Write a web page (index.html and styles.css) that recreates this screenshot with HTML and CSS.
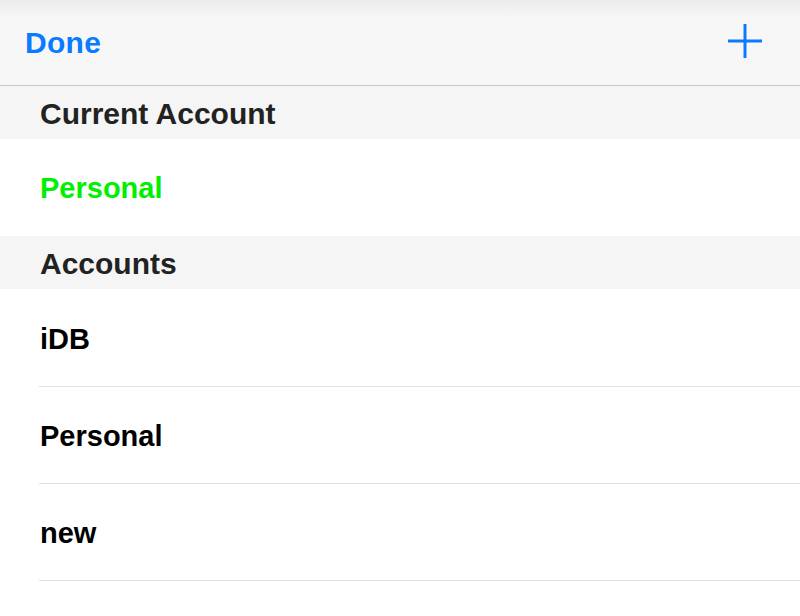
FILE: index.html
```html
<!DOCTYPE html>
<html lang="en">
<head>
    <meta charset="UTF-8">
    <title>Accounts</title>
    <link rel="stylesheet" href="styles.css">
</head>
<body>
<div class="nav">
    <span class="nav-btn">Done</span>
    <svg class="plus" width="36" height="36" viewBox="0 0 36 36">
        <path d="M18 1 V35 M1 18 H35" stroke="#0a7aff" stroke-width="3" fill="none"/>
    </svg>
</div>
<div class="section">Current Account</div>
<div class="row current">Personal</div>
<div class="section">Accounts</div>
<ul class="list">
    <li>iDB</li>
    <li>Personal</li>
    <li>new</li>
</ul>
</body>
</html>
```

FILE: styles.css
```css
body{
    margin: 0;
    background: #fff;
    font-family: "Liberation Sans", Arial, sans-serif;
    overflow: hidden;
}
.nav{
    height: 85px;
    border-bottom: 1px solid #c8c8c8;
    background: linear-gradient(#ececec, #f7f7f7 18px, #f7f7f7);
    display: flex;
    justify-content: space-between;
    align-items: center;
    padding: 0 37px 0 25px;
}
.nav-btn{
    color: #0a7aff;
    font-size: 30px;
    font-weight: bold;
    letter-spacing: 0.3px;
    margin-top: 1px;
}
.plus{
    margin-top: -4px;
}
.section{
    background: #f5f5f5;
    color: #222;
    font-size: 30px;
    font-weight: bold;
    height: 53px;
    display: flex;
    align-items: center;
    padding: 2px 0 0 40px;
    box-sizing: border-box;
}
.section + .list{
    margin-top: 1px;
}
.row, .list li{
    display: flex;
    align-items: center;
    padding-left: 40px;
    font-size: 29px;
    font-weight: bold;
    color: #000;
}
.current{
    height: 97px;
    padding-top: 2px;
    box-sizing: border-box;
    color: #00f000;
}
.list{
    list-style: none;
    margin: 0;
    padding: 0 0 0 39px;
}
.list li{
    height: 97px;
    padding: 3px 0 0 1px;
    box-sizing: border-box;
    border-bottom: 1px solid #e0e0e0;
}
```
